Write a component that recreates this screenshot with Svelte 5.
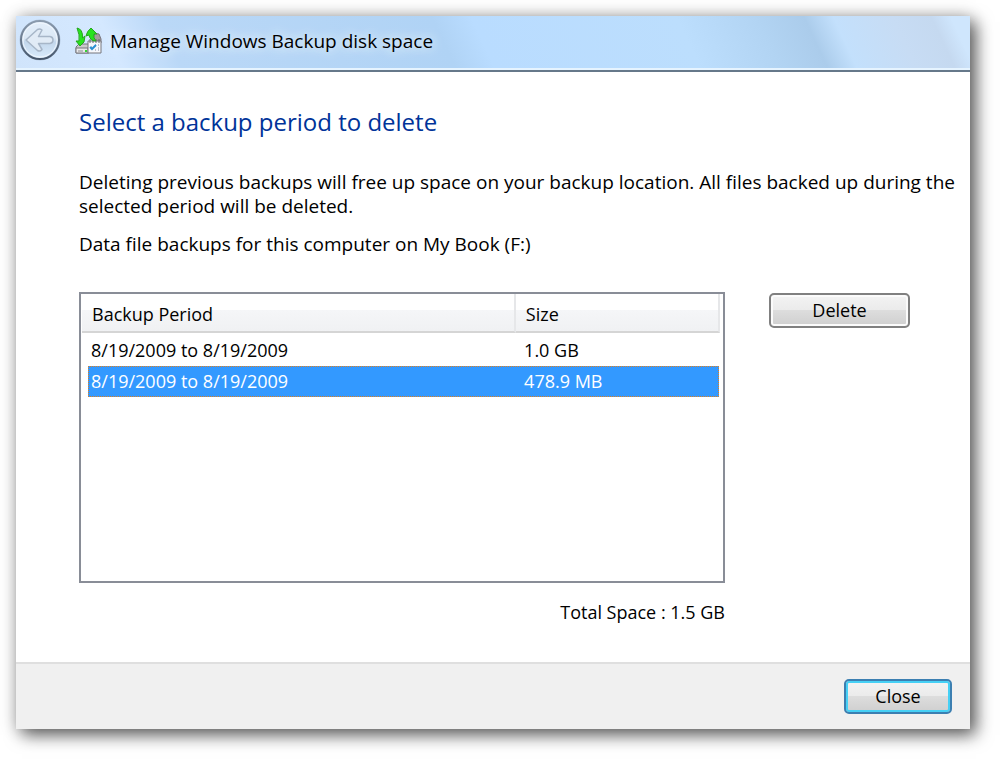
<script lang="ts">
	type Backup = { id: number; period: string; size: string };

	let backups: Backup[] = $state([
		{ id: 1, period: '8/19/2009 to 8/19/2009', size: '1.0 GB' },
		{ id: 2, period: '8/19/2009 to 8/19/2009', size: '478.9 MB' }
	]);
	let selectedId: number | null = $state(2);
	let open = $state(true);

	function deleteSelected() {
		backups = backups.filter((b) => b.id !== selectedId);
		selectedId = null;
	}
</script>

{#if open}
	<div class="window">
		<header class="titlebar">
			<button class="back" aria-label="Back">
				<svg width="42" height="42" viewBox="0 0 42 42" fill="none">
					<defs>
						<linearGradient id="disc" x1="0" y1="0" x2="0" y2="1">
							<stop offset="0" stop-color="#e4effb" />
							<stop offset="0.45" stop-color="#dbe8f5" />
							<stop offset="0.55" stop-color="#c3d7ec" />
							<stop offset="1" stop-color="#d9ebfc" />
						</linearGradient>
						<linearGradient id="rim" x1="0" y1="0" x2="0" y2="1">
							<stop offset="0" stop-color="#8b9bae" />
							<stop offset="1" stop-color="#46566b" />
						</linearGradient>
					</defs>
					<circle cx="21" cy="21" r="20" stroke="#b4c8df" stroke-width="1" />
					<circle cx="21" cy="21" r="19" fill="url(#disc)" stroke="url(#rim)" stroke-width="2" />
					<circle cx="21" cy="21" r="17" stroke="#f2f8ff" stroke-width="1" />
					<path
						d="M7 21 18.500 10.500Q21 9.500 23 11L19.500 17.500H31Q34 18 34 21T31 24.500H19.500L23 30.500Q21 33 18.500 31.500Z"
						fill="#e1ebf6"
						stroke="#a7b6c8"
						stroke-width="1.500"
						stroke-linejoin="round"
					/>
				</svg>
			</button>
			<svg class="app-icon" width="28" height="28" viewBox="0 0 28 28" fill="none">
				<path d="M1 20 4 17H14V26H1Z" fill="#c9c9cb" stroke="#77777c" />
				<path d="M1 21H13V26H1Z" fill="#e9e9eb" stroke="#77777c" />
				<path d="M3 24H8" stroke="#8e8e93" />
				<path d="M10 24H12" stroke="#35d433" stroke-width="2" />
				<path d="M18 9Q20 5 24 7L26 12V16H18Z" fill="#a39c9f" stroke="#77727a" />
				<path d="M13 14H26V26H13Z" fill="#f6f8fc" stroke="#77777c" />
				<path d="M15 12V16M18 12V16M21 12V16M24 12V16" stroke="#66666d" />
				<path d="M16 20H17M20 18H21M23 18H24M23 21H24M20 23H21M23 23H24" stroke="#7d86a0" />
				<path d="M15 20 17 22 21 18" stroke="#2a8fd2" stroke-width="2" />
				<path
					d="M2 1Q8 2 7.500 11L10 9 9 15 5 19 1 14 4 14Q5 8 2 1Z"
					fill="#27e41f"
					stroke="#27a51f"
				/>
				<path
					d="M16 1 22 7 19 7Q18 11 21 14Q15 14 14 8L11 9Q12 4 16 1Z"
					fill="#27e41f"
					stroke="#27a51f"
				/>
			</svg>
			<span class="title">Manage Windows Backup disk space</span>
		</header>

		<main class="content">
			<h1>Select a backup period to delete</h1>
			<p>
				Deleting previous backups will free up space on your backup location. All files backed up
				during the selected period will be deleted.
			</p>
			<p id="list-label">Data file backups for this computer on My Book (F:)</p>

			<div class="columns">
				<div class="list-column">
					<div class="list">
						<table aria-labelledby="list-label">
							<thead>
								<tr>
									<th>Backup Period</th>
									<th>Size</th>
								</tr>
							</thead>
							<tbody>
								{#each backups as backup (backup.id)}
									<tr
										class:selected={backup.id === selectedId}
										onclick={() => (selectedId = backup.id)}
									>
										<td>{backup.period}</td>
										<td class="size">{backup.size}</td>
									</tr>
								{/each}
							</tbody>
						</table>
					</div>
					<div class="total">Total Space : 1.5 GB</div>
				</div>
				<button class="btn delete" onclick={deleteSelected}>Delete</button>
			</div>
		</main>

		<footer>
			<button class="btn close" onclick={() => (open = false)}>Close</button>
		</footer>
	</div>
{/if}

<style>
	:global(body) {
		background: #fff;
	}

	.window {
		margin: 16px 30px 30px 16px;
		background: #fff;
		color: #000;
		font-family: 'Open Sans', 'Noto Sans', sans-serif;
		font-size: 18px;
		line-height: 24px;
		box-shadow:
			6px 6px 16px rgba(0, 0, 0, 0.6),
			0 0 16px rgba(0, 0, 0, 0.2);
	}

	.titlebar {
		display: flex;
		align-items: center;
		height: 54px;
		padding-left: 3px;
		border-bottom: 2px solid #66788a;
		box-shadow: inset 0 -2px #e6f4ff;
		background: linear-gradient(
			65deg,
			#d0e4fb 0%,
			#d4e8ff 11%,
			#bad8f7 17%,
			#b0d3f5 45%,
			#b9dcff 49%,
			#bcdefd 70%,
			#b2d4f3 78%,
			#abcceb 83%,
			#c3e0fc 86%,
			#c7dcf4 92%,
			#c5d9f0 96%,
			#cfe6fd 98%
		);
	}

	.back {
		width: 42px;
		height: 42px;
		padding: 0;
		margin-bottom: 6px;
		border: none;
		border-radius: 50%;
		background: none;
	}

	.back svg,
	.app-icon {
		display: block;
	}

	.app-icon {
		margin: 0 7px 4px 14px;
	}

	.title {
		padding-bottom: 4px;
		font-size: 19px;
		text-shadow:
			0 0 8px #e4f1ff,
			0 0 14px #e4f1ff;
	}

	.content {
		padding: 34px 12px 38px 63px;
	}

	h1 {
		margin: 0 0 32px;
		color: #003399;
		font-size: 24px;
		font-weight: 400;
		line-height: 32px;
	}

	p {
		margin: 0 0 14px;
		font-size: 19px;
	}

	.columns {
		display: flex;
		align-items: flex-start;
		gap: 44px;
		margin-top: 36px;
		padding-right: 48px;
	}

	.list-column {
		flex: 1;
	}

	.list {
		min-height: 287px;
		padding: 0 3px 0 1px;
		border: 2px solid #898d97;
	}

	table,
	thead,
	tbody {
		display: block;
	}

	tr {
		display: grid;
		grid-template-columns: 1fr 32%;
	}

	th {
		height: 37px;
		padding: 0 10px;
		border-right: 2px solid #e6e7e9;
		border-bottom: 2px solid #d5d5d5;
		background: linear-gradient(#fff 42%, #f5f6f8 43%, #f0f1f3);
		font-weight: 400;
		line-height: 40px;
		text-align: left;
	}

	tbody {
		padding: 2px 1px 0 6px;
	}

	td {
		padding: 0 3px;
		line-height: 31px;
	}

	.size {
		padding-left: 7px;
	}

	.selected {
		outline: 1px dotted #e0801e;
		outline-offset: -1px;
		background: #3399ff;
		color: #fff;
	}

	.total {
		margin-top: 17px;
		text-align: right;
	}

	.btn {
		height: 35px;
		padding: 0 0 2px;
		border: 2px solid #808080;
		border-radius: 5px;
		background: linear-gradient(#f3f3f3, #ebebeb 49%, #dddddd 50%, #cfcfcf);
		box-shadow: inset 0 0 0 2px #fbfbfb;
		color: #000;
		font: inherit;
	}

	.delete {
		width: 141px;
		margin-top: 1px;
	}

	footer {
		display: flex;
		justify-content: flex-end;
		padding: 15px 18px;
		border-top: 2px solid #dfdfdf;
		background: #f0f0f0;
	}

	.close {
		width: 108px;
		border-color: #3c7fb1;
		box-shadow: inset 0 0 0 2px #46d0f5;
	}
</style>
